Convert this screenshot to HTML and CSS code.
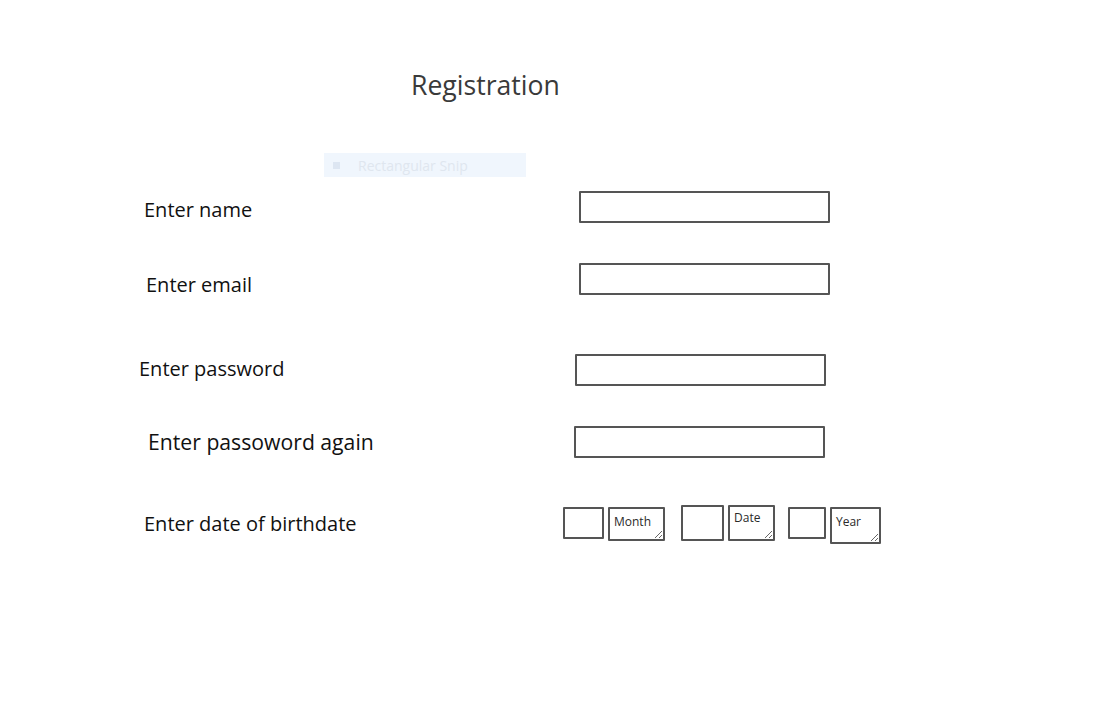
FILE: index.html
```html
<!DOCTYPE html>
<html lang="en">
<head>
<meta charset="utf-8">
<title>Registration</title>
<link rel="stylesheet" href="styles.css">
</head>
<body>
<main class="page">
  <h1 class="title">Registration</h1>
  <div class="snip"><span class="snip-icon"></span><span class="snip-text">Rectangular Snip</span></div>
  <form class="form">
    <div class="row row-name">
      <label class="label">Enter name</label>
      <input class="field" type="text">
    </div>
    <div class="row row-email">
      <label class="label">Enter email</label>
      <input class="field" type="text">
    </div>
    <div class="row row-pass">
      <label class="label">Enter password</label>
      <input class="field" type="password">
    </div>
    <div class="row row-pass2">
      <label class="label">Enter passoword again</label>
      <input class="field" type="password">
    </div>
    <div class="row row-dob">
      <label class="label">Enter date of birthdate</label>
      <div class="dob">
        <input class="box box-1" type="text">
        <textarea class="ta ta-month">Month</textarea>
        <input class="box box-2" type="text">
        <textarea class="ta ta-date">Date</textarea>
        <input class="box box-3" type="text">
        <textarea class="ta ta-year">Year</textarea>
      </div>
    </div>
  </form>
</main>
</body>
</html>
```
FILE: styles.css
```css
* { box-sizing: border-box; }
html, body { margin: 0; background: #fff; }
body {
  font-family: "Open Sans", "Noto Sans", sans-serif;
  color: #111;
  width: 1103px;
  height: 705px;
  overflow: hidden;
}
.page { padding-top: 66px; }
.title {
  margin: 0 0 0 411px;
  font-size: 26.6px;
  font-weight: 400;
  line-height: 38px;
  color: #3a3a3a;
}
.snip {
  margin: 49px 0 0 324px;
  width: 202px;
  height: 24px;
  background: #f0f6fd;
  display: flex;
  align-items: center;
  padding-left: 9px;
}
.snip-icon {
  width: 7px;
  height: 7px;
  background: #dde6f2;
  margin-right: 18px;
}
.snip-text {
  font-size: 14px;
  color: #dfe6ef;
}
.form { display: flex; flex-direction: column; }
.row {
  display: grid;
  grid-template-columns: 435px auto;
  align-items: center;
  padding-left: 144px;
  height: 32px;
}
.label {
  font-size: 20px;
  line-height: 28px;
  color: #111;
}
.field {
  width: 251px;
  height: 32px;
  border: 2px solid #555;
  border-radius: 1px;
  background: #fff;
  margin: 0;
}
.row-name { margin-top: 12px; }
.row-name .label { margin-top: 7px; }
.row-email { margin-top: 38px; }
.row-email .label { margin: 12px 0 0 2px; }
.row-pass { margin-top: 63px; }
.row-pass .label { margin: -3px 0 0 -5px; }
.row-pass .field { margin-left: -4px; }
.row-pass2 { margin-top: 40px; }
.row-pass2 .label { margin: -1px 0 0 4px; font-size: 21.2px; }
.row-pass2 .field { margin-left: -5px; }
.row-dob { margin-top: 47px; grid-template-columns: 419px auto; height: 38px; align-items: start; }
.row-dob .label { margin-top: 5px; }
.dob { display: flex; align-items: flex-start; }
.box, .ta {
  border: 2px solid #555;
  border-radius: 1px;
  background: #fff;
  margin: 0;
  padding: 0;
}
.ta {
  font-family: "Open Sans", "Noto Sans", sans-serif;
  font-size: 12px;
  line-height: 16px;
  color: #2a2a2a;
  padding: 3px 4px;
  overflow: hidden;
}
.box-1 { width: 41px; height: 32px; margin-top: 2px; }
.ta-month { width: 57px; height: 34px; margin: 2px 0 0 4px; padding-top: 5px; }
.box-2 { width: 43px; height: 36px; margin-left: 16px; }
.ta-date { width: 47px; height: 36px; margin-left: 4px; padding-top: 3px; }
.box-3 { width: 38px; height: 32px; margin: 2px 0 0 13px; }
.ta-year { width: 51px; height: 37px; margin: 2px 0 0 4px; padding-top: 5px; }
```
